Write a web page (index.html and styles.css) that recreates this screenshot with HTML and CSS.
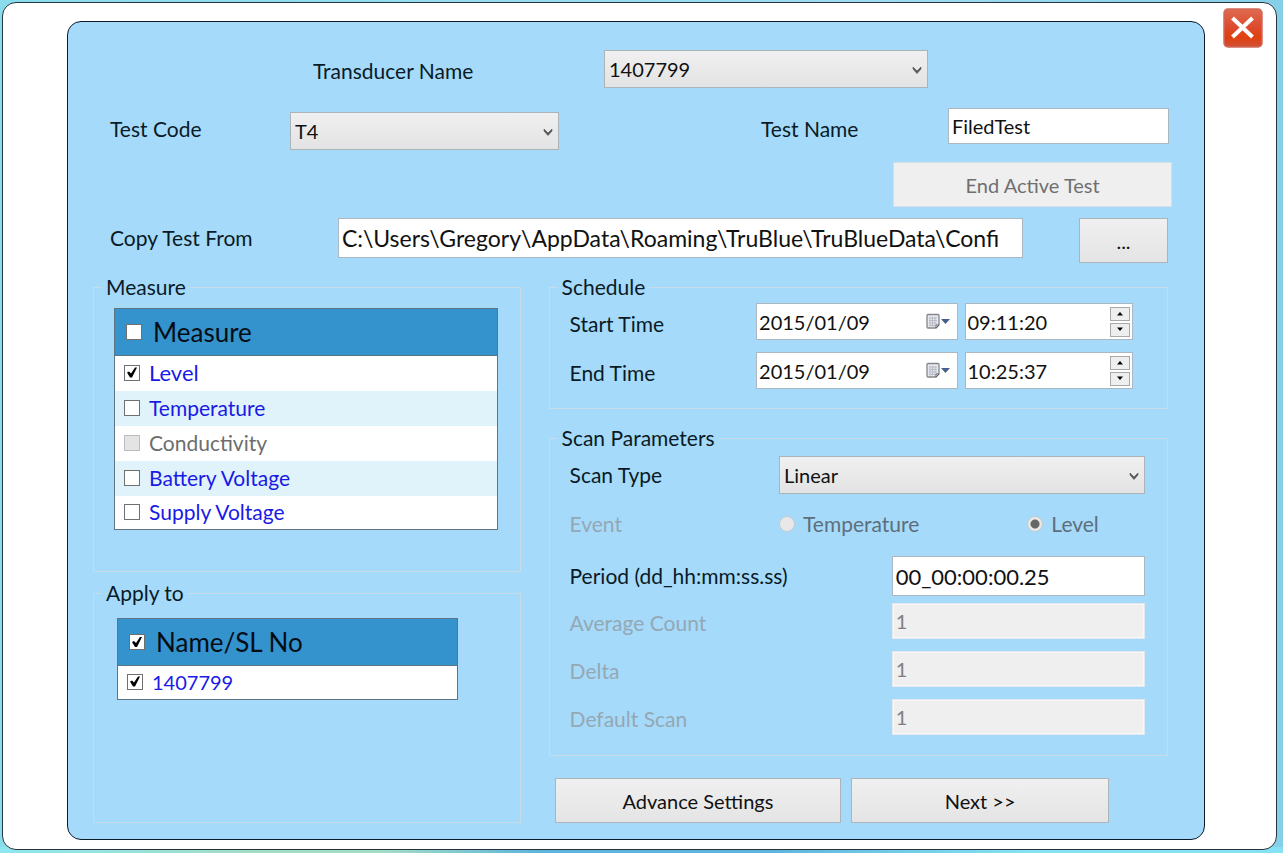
FILE: index.html
```html
<!DOCTYPE html>
<html lang="en">
<head>
<meta charset="utf-8">
<meta name="viewport" content="width=device-width, initial-scale=1">
<title>Test Setup</title>
<link rel="stylesheet" href="styles.css">
</head>
<body>
<svg class="symbols" aria-hidden="true">
  <symbol id="chevron" viewBox="0 0 10 8"><path d="M1 1v2l4 4.500 4-4.500V1L5 5z" fill="#555" stroke="#555" stroke-width=".6"/></symbol>
  <symbol id="calendar" viewBox="0 0 28 18">
    <path d="M4 1.500h10a1 1 0 0 1 1 1V12l-3 3H4a1 1 0 0 1-1-1V2.500a1 1 0 0 1 1-1z" fill="#e6e8ee" stroke="#84868c" stroke-width="1.300"/>
    <path d="M5 5h8M5 7.500h8M5 10h8M5 12.500h6M6 4v9.500M8.500 4v9.500M11 4v9" stroke="#b4b8c2" stroke-width=".9" fill="none"/>
    <path d="M15 12l-3 3v-3z" fill="#fff" stroke="#5e6066"/>
    <path d="M17 6h9l-4.500 5z" fill="#465f8c"/>
  </symbol>
  <symbol id="up" viewBox="0 0 8 5"><path d="M1 4.500 4 1l3 3.500z" fill="#000"/></symbol>
  <symbol id="down" viewBox="0 0 8 5"><path d="M1 .5 4 4 7 .5z" fill="#000"/></symbol>
</svg>
<main class="dialog">
  <form class="panel">
    <div class="row row-transducer">
      <label for="transducer">Transducer Name</label>
      <span class="select"><select id="transducer"><option>1407799</option></select><svg><use href="#chevron"/></svg></span>
    </div>
    <div class="row row-test">
      <label for="code">Test Code</label>
      <span class="select low"><select id="code"><option>T4</option></select><svg><use href="#chevron"/></svg></span>
      <label class="name-label" for="name">Test Name</label>
      <input class="field high" id="name" type="text" value="FiledTest">
    </div>
    <div class="row row-end">
      <button class="button" type="button" disabled>End Active Test</button>
    </div>
    <div class="row row-copy">
      <label for="copy">Copy Test From</label>
      <input class="field path" id="copy" type="text" value="C:\Users\Gregory\AppData\Roaming\TruBlue\TruBlueData\Confi">
      <button class="button browse" type="button">...</button>
    </div>

    <div class="columns">
      <div class="left">
        <fieldset class="measure">
          <legend>Measure</legend>
          <table class="list">
            <thead><tr><th><label><input type="checkbox">Measure</label></th></tr></thead>
            <tbody>
              <tr><td><label class="current"><input type="checkbox" checked>Level</label></td></tr>
              <tr><td><label><input type="checkbox">Temperature</label></td></tr>
              <tr><td><label class="off"><input type="checkbox" disabled>Conductivity</label></td></tr>
              <tr><td><label><input type="checkbox">Battery Voltage</label></td></tr>
              <tr><td><label><input type="checkbox">Supply Voltage</label></td></tr>
            </tbody>
          </table>
        </fieldset>
        <fieldset class="apply">
          <legend>Apply to</legend>
          <table class="list">
            <thead><tr><th><label><input type="checkbox" checked>Name/SL No</label></th></tr></thead>
            <tbody><tr><td><label class="serial"><input type="checkbox" checked>1407799</label></td></tr></tbody>
          </table>
        </fieldset>
      </div>

      <div class="right">
        <fieldset class="schedule">
          <legend>Schedule</legend>
          <div class="row row-time">
            <label for="start-date">Start Time</label>
            <span class="combo"><input id="start-date" type="text" value="2015/01/09"><button class="pick" type="button" aria-label="Choose start date"><svg><use href="#calendar"/></svg></button></span>
            <span class="combo time"><input type="text" value="09:11:20" aria-label="Start time of day"><span class="spin"><button type="button" aria-label="Later"><svg><use href="#up"/></svg></button><button type="button" aria-label="Earlier"><svg><use href="#down"/></svg></button></span></span>
          </div>
          <div class="row row-time">
            <label for="end-date">End Time</label>
            <span class="combo"><input id="end-date" type="text" value="2015/01/09"><button class="pick" type="button" aria-label="Choose end date"><svg><use href="#calendar"/></svg></button></span>
            <span class="combo time"><input type="text" value="10:25:37" aria-label="End time of day"><span class="spin"><button type="button" aria-label="Later"><svg><use href="#up"/></svg></button><button type="button" aria-label="Earlier"><svg><use href="#down"/></svg></button></span></span>
          </div>
        </fieldset>
        <fieldset class="scan">
          <legend>Scan Parameters</legend>
          <div class="row row-type">
            <label for="type">Scan Type</label>
            <span class="select"><select id="type"><option>Linear</option></select><svg><use href="#chevron"/></svg></span>
          </div>
          <div class="row row-event">
            <span class="faded">Event</span>
            <label class="radio"><input type="radio" name="event" disabled>Temperature</label>
            <label class="radio"><input type="radio" name="event" disabled checked>Level</label>
          </div>
          <div class="row row-value">
            <label for="period">Period (dd_hh:mm:ss.ss)</label>
            <input class="field period" id="period" type="text" value="00_00:00:00.25">
          </div>
          <div class="row row-value">
            <label class="faded" for="average">Average Count</label>
            <input class="field" id="average" type="text" value="1" disabled>
          </div>
          <div class="row row-value">
            <label class="faded" for="delta">Delta</label>
            <input class="field" id="delta" type="text" value="1" disabled>
          </div>
          <div class="row row-value">
            <label class="faded" for="default">Default Scan</label>
            <input class="field" id="default" type="text" value="1" disabled>
          </div>
        </fieldset>
        <div class="actions">
          <button class="button" type="button">Advance Settings</button>
          <button class="button" type="submit">Next &gt;&gt;</button>
        </div>
      </div>
    </div>
  </form>
  <button class="close" type="button" aria-label="Close">
    <svg viewBox="0 0 40 40" aria-hidden="true">
      <defs><linearGradient id="red" x1="0" y1="0" x2="0" y2="1"><stop offset="0" stop-color="#df6a50"/><stop offset=".5" stop-color="#dc4a2c"/><stop offset=".75" stop-color="#e0400f"/><stop offset="1" stop-color="#cf5238"/></linearGradient></defs>
      <rect x="1" y="1" width="38" height="38" rx="4" fill="url(#red)" stroke="#cf6a58" stroke-width="1.500"/>
      <path d="M9.500 10 29.500 29M29.500 10 9.500 29" stroke="#fff" stroke-width="4"/>
    </svg>
  </button>
</main>
</body>
</html>
```
FILE: styles.css
```css
* { box-sizing: border-box; }

body {
  margin: 0;
  min-height: 100vh;
  display: flex;
  padding: 2px 6px 3px 2px;
  background:
    linear-gradient(90deg, #8fe6ee 0%, #a2dcc4 20%, #a2dcc4 30%, #5fb4dc 42%, #5fb4dc 60%, #86e2f2 80%, #86e2f2 100%) bottom / 100% 6px no-repeat,
    linear-gradient(90deg, #8adcec, #9fdcf2 70%, #86cfe8);
  font: 21px/24px Lato, "Open Sans", sans-serif;
  color: #0a1a26;
}

input, select, button { font: inherit; font-size: 20px; color: inherit; margin: 0; min-width: 0; }
button { padding: 0; }
.symbols { position: absolute; width: 0; height: 0; }

.dialog {
  flex: 1;
  display: flex;
  align-items: flex-start;
  padding: 18px 13px 9px 64px;
  border: 1px solid #26343d;
  border-radius: 14px;
  background: #fff;
}

.panel {
  flex: 1;
  align-self: stretch;
  padding: 28px 32px 13px 25px;
  border: 1px solid #0c1c28;
  border-radius: 14px;
  background: #a5dafa;
}

.close {
  width: 40px;
  height: 40px;
  margin: -13px 0 0 18px;
  border: 0;
  background: none;
}
.close svg { display: block; width: 40px; height: 40px; }

.row { display: grid; align-items: center; }
.row-transducer { grid-template-columns: 291fr 324fr 244fr; padding-left: 220px; }
.row-transducer label { padding-top: 4px; }
.row-test { grid-template-columns: 180fr 269fr 202fr 187fr 221fr 3fr; padding-left: 17px; margin-top: 20px; min-height: 42px; }
.row-test > .name-label { grid-column: 4; }
.low { align-self: end; }
.high { align-self: start; }
.row-end { grid-template-columns: 801fr 279fr; margin-top: 12px; }
.row-end .button { grid-column: 2; }
.row-copy { grid-template-columns: 228fr 685fr 56fr 89fr 4fr; padding-left: 17px; margin-top: 11px; align-items: start; }
.row-copy label { line-height: 40px; }
.row-copy .browse { grid-column: 4; }

.select { position: relative; display: block; }
.select select {
  display: block;
  appearance: none;
  width: 100%;
  height: 38px;
  padding: 0 24px 0 4px;
  border: 1px solid #acb4ba;
  border-radius: 0;
  background: linear-gradient(#f0f0f0, #e3e3e3);
  color: #111;
}
.select svg { position: absolute; right: 6px; top: 16px; width: 10px; height: 8px; pointer-events: none; }

.field {
  width: 100%;
  height: 36px;
  padding: 0 3px;
  border: 1px solid #abb8c2;
  border-radius: 0;
  background: #fff;
  color: #111;
}
.path, .period { height: 40px; }
.path { font-size: 23px; }
.period { font-size: 22px; }
.field:disabled { background: #efefef; border-color: #e2e8ec; color: #808080; box-shadow: inset 0 0 0 1px #f8f8f8; }

.button {
  height: 45px;
  border: 1px solid #acb4ba;
  border-radius: 0;
  background: linear-gradient(#f0f0f0, #e4e4e4);
  color: #111;
}
.button:disabled { background: #efefef; border-color: #d5e0e6; color: #6f6f6f; }

.columns { display: grid; grid-template-columns: 428fr 28fr 620fr 4fr; margin-top: 12px; }
.left { display: flex; flex-direction: column; gap: 9px; }
.right { grid-column: 3; }

fieldset { min-width: 0; margin: 0; border: 1px solid #c9dbe6; }
legend { margin-left: -12px; padding: 0 4px; line-height: 24px; }
.measure { padding: 9px 22px 41px 20px; }
.apply { flex: 1; padding: 13px 62px 0 23px; }
.apply legend { margin-left: -15px; }

.list { width: 100%; border-spacing: 0; border: 1px solid #5f7482; background: #fff; color: #1a1ae6; }
.list th { height: 47px; padding: 0 0 0 11px; border-bottom: 1px solid #5f7482; background: #3492cd; color: #050d14; font-size: 26px; font-weight: 400; line-height: 32px; text-align: left; }
.list td { height: 35px; padding: 0 0 2px 9px; }
.list tr:last-child td { height: 33px; }
.list tbody tr:nth-child(even) { background: #e0f3fa; }
.list label { display: flex; align-items: center; gap: 9px; }
.list th label { gap: 11px; }
.list .current { font-size: 22px; }
.list .serial { font-size: 20px; }
.list .off { color: #6d6d6d; }

input[type="checkbox"] { appearance: none; flex: none; width: 16px; height: 16px; border: 1px solid #707070; background: #fff; }
input[type="checkbox"]:checked::before {
  content: "";
  display: block;
  width: 14px;
  height: 14px;
  background: #000;
  clip-path: polygon(2px 7px, 4px 6px, 6px 8px, 10px 2px, 12px 2px, 7px 12px, 5px 12px);
}
input[type="checkbox"]:disabled { background: #e4e4e4; border-color: #bcbcbc; }

.schedule { padding: 4px 0 19px 20px; }
.row-time { grid-template-columns: 187fr 202fr 7fr 169fr 34fr; }
.row-time label { padding-top: 4px; }
.row-time + .row-time { margin-top: 12px; }
.combo { display: flex; align-items: center; height: 37px; border: 1px solid #abb8c2; background: #fff; color: #111; }
.combo.time { grid-column: 4; }
.combo input { flex: 1; width: 0; height: 33px; padding: 0 2px; border: 0; background: none; }
.pick { width: 28px; height: 24px; margin-right: 5px; border: 0; background: none; }
.pick svg { display: block; width: 28px; height: 18px; margin: 3px 0; }
.spin { display: grid; gap: 2px; margin-right: 2px; }
.spin button { width: 20px; height: 14px; border: 1px solid #a9a9a9; background: #eee; display: grid; place-items: center; }
.spin svg { width: 8px; height: 5px; }

.scan { margin-top: 17px; padding: 6px 0 20px 20px; }
.row-type { grid-template-columns: 210fr 367fr 22fr; }
.row-event { grid-template-columns: 210fr 249fr 140fr; min-height: 36px; margin-top: 12px; }
.row-value { grid-template-columns: 323fr 254fr 22fr; margin-top: 12px; }
.row-event + .row-value { margin-top: 14px; }
.row-event + .row-value + .row-value { margin-top: 7px; }
.row-value .faded { padding-top: 4px; }
.faded { color: #94a8b4; }

.radio { display: flex; align-items: center; gap: 8px; color: #5d6f7b; }
.radio input { appearance: none; width: 16px; height: 16px; border: 1px solid #c3cbd0; border-radius: 50%; background: #e8e8e8; }
.radio input:checked { background: radial-gradient(circle, #666 0 4px, #e8e8e8 5px); }

.actions { display: grid; grid-template-columns: 287fr 258fr 49fr; column-gap: 10px; margin-top: 22px; padding-left: 6px; }
```
